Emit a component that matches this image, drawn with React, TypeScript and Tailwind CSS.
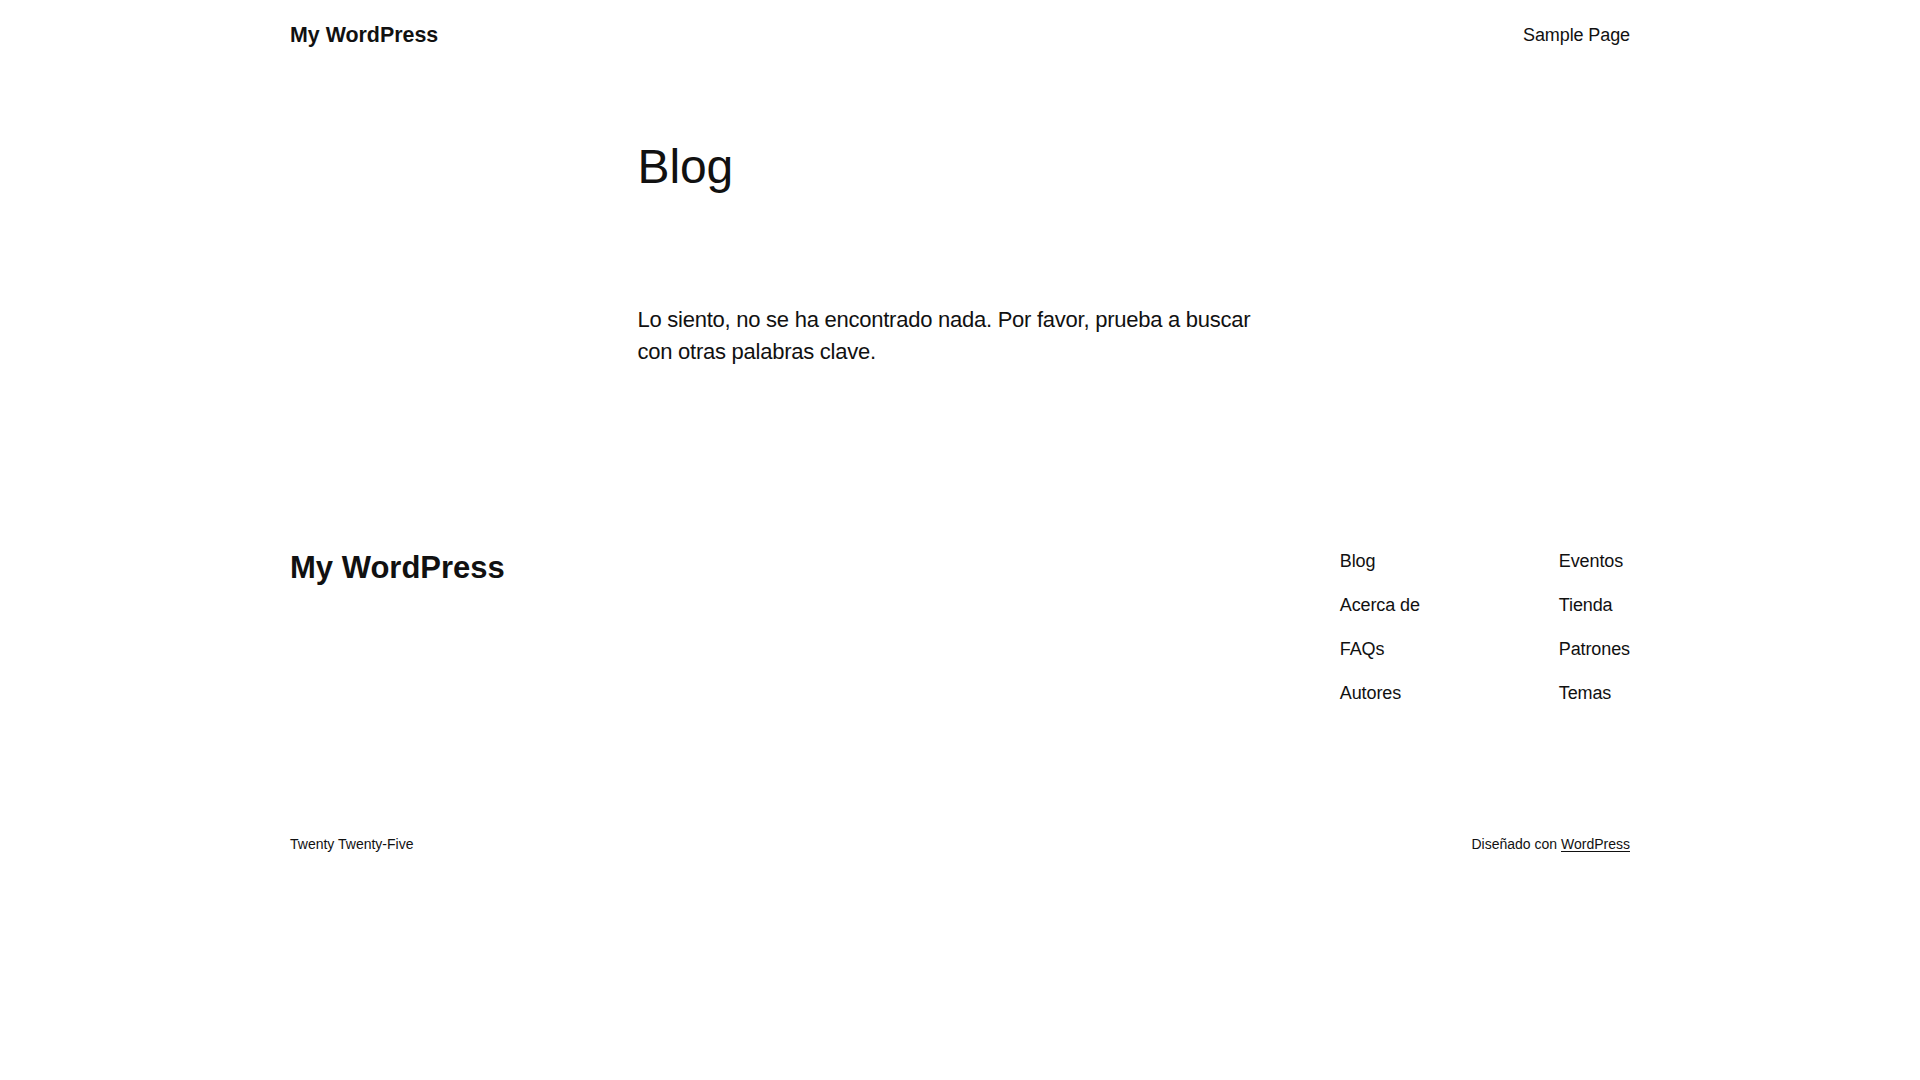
const footerNav = [
  ["Blog", "Acerca de", "FAQs", "Autores"],
  ["Eventos", "Tienda", "Patrones", "Temas"],
];

export default function App() {
  return (
    <div className="min-h-screen bg-white text-[#111111] font-['Liberation_Sans',Arial,sans-serif]">
      <header className="mx-auto w-[1340px] h-[68px] flex items-center justify-between">
        <a href="#" className="block mt-[2px] text-[21.4px] font-bold leading-[26px]">
          My WordPress
        </a>
        <a href="#" className="block mt-[2px] text-[18px] leading-[22px] tracking-[-0.1px]">
          Sample Page
        </a>
      </header>

      <main className="mx-auto w-[645px] pt-[72px]">
        <h1 className="text-[48px] leading-[54px] font-normal tracking-[-0.1px]">Blog</h1>
        <p className="mt-[110px] text-[22px] leading-[32px] tracking-[-0.25px]">
          Lo siento, no se ha encontrado nada. Por favor, prueba a buscar con otras palabras clave.
        </p>
      </main>

      <footer className="mx-auto w-[1340px] pt-[180px]">
        <div className="flex items-start justify-between">
          <a href="#" className="mt-[1px] text-[31px] leading-[37px] font-bold">
            My WordPress
          </a>
          <nav className="flex">
            {footerNav.map((col, i) => (
              <ul key={i} className={`flex flex-col gap-[17px] ${i === 0 ? "w-[219px]" : ""}`}>
                {col.map((item) => (
                  <li key={item}>
                    <a href="#" className="text-[18px] leading-[27px] tracking-[-0.1px]">
                      {item}
                    </a>
                  </li>
                ))}
              </ul>
            ))}
          </nav>
        </div>

        <div className="mt-[127px] flex items-center justify-between text-[14px] leading-[21px]">
          <p>Twenty Twenty-Five</p>
          <p>
            Diseñado con{" "}
            <a href="#" className="underline underline-offset-2">
              WordPress
            </a>
          </p>
        </div>
      </footer>
    </div>
  );
}
